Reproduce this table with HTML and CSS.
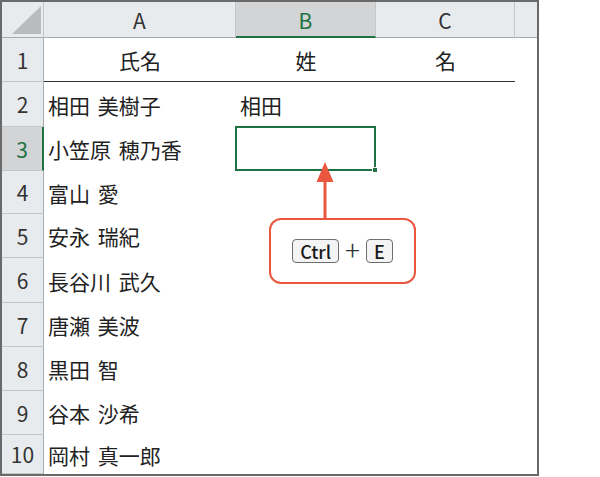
FILE: index.html
```html
<!DOCTYPE html>
<html lang="ja">
<head>
<meta charset="utf-8">
<link rel="stylesheet" href="styles.css">
</head>
<body>
<div class="sheet">
  <div class="corner"><svg class="corner-tri" width="42" height="36" viewBox="0 0 42 36"><polygon points="10,32 39,4 39,32" fill="#b9bcbf"/></svg></div>
  <div class="colhead">A</div>
  <div class="colhead sel">B</div>
  <div class="colhead">C</div>
  <div class="colhead last"></div>

  <div class="rowhead">1</div>
  <div class="cell center rule">氏名</div>
  <div class="cell center rule">姓</div>
  <div class="cell center rule">名</div>
  <div class="cell"></div>

  <div class="rowhead">2</div>
  <div class="cell">相田 美樹子</div>
  <div class="cell">相田</div>
  <div class="cell"></div>
  <div class="cell"></div>

  <div class="rowhead sel">3</div>
  <div class="cell">小笠原 穂乃香</div>
  <div class="cell active"><span class="handle"></span></div>
  <div class="cell"></div>
  <div class="cell"></div>

  <div class="rowhead">4</div>
  <div class="cell">富山 愛</div>
  <div class="cell"></div>
  <div class="cell"></div>
  <div class="cell"></div>

  <div class="rowhead">5</div>
  <div class="cell">安永 瑞紀</div>
  <div class="cell"></div>
  <div class="cell"></div>
  <div class="cell"></div>

  <div class="rowhead">6</div>
  <div class="cell">長谷川 武久</div>
  <div class="cell"></div>
  <div class="cell"></div>
  <div class="cell"></div>

  <div class="rowhead">7</div>
  <div class="cell">唐瀬 美波</div>
  <div class="cell"></div>
  <div class="cell"></div>
  <div class="cell"></div>

  <div class="rowhead">8</div>
  <div class="cell">黒田 智</div>
  <div class="cell"></div>
  <div class="cell"></div>
  <div class="cell"></div>

  <div class="rowhead">9</div>
  <div class="cell">谷本 沙希</div>
  <div class="cell"></div>
  <div class="cell"></div>
  <div class="cell"></div>

  <div class="rowhead">10</div>
  <div class="cell">岡村 真一郎</div>
  <div class="cell"></div>
  <div class="cell"></div>
  <div class="cell"></div>

  <svg class="arrow" width="20" height="60" viewBox="0 0 20 60">
    <line x1="10" y1="18" x2="10" y2="60" stroke="#e9573f" stroke-width="3"/>
    <polygon points="10,2 1.5,22 18.5,22" fill="#e9573f"/>
  </svg>

  <div class="callout">
    <span class="key">Ctrl</span>
    <span class="plus">+</span>
    <span class="key">E</span>
  </div>
</div>
</body>
</html>
```

FILE: styles.css
```css
* { box-sizing: border-box; }

html, body {
  margin: 0;
  padding: 0;
  background: #ffffff;
}

body {
  font-family: "Noto Sans CJK JP", "Noto Sans", sans-serif;
  color: #222;
}

.sheet {
  position: relative;
  margin-top: 0;
  width: 539px;
  height: 476px;
  border: 2px solid #6a6a6a;
  display: grid;
  grid-template-columns: 42px 192px 140px 139px 22px;
  grid-template-rows: 36px 44px 45px 44px 43px 44px 45px 44px 44px 44px 39px;
  overflow: hidden;
}

.corner {
  background: #e8ebee;
  border-right: 1px solid #c4c6c8;
  border-bottom: 1px solid #a9abad;
}

.corner-tri { display: block; }

.colhead {
  background: #e8ebee;
  border-right: 1px solid #c4c6c8;
  border-bottom: 1px solid #a9abad;
  display: flex;
  align-items: center;
  justify-content: center;
  font-size: 21px;
  color: #333;
  padding-top: 1px;
}

.colhead.sel {
  background: #d2d4d6;
  color: #1f7244;
  border-bottom: 2px solid #1f7244;
}

.colhead.last {
  border-right: none;
}

.rowhead {
  background: #e8ebee;
  border-right: 1px solid #a9abad;
  border-bottom: 1px solid #c4c6c8;
  display: flex;
  align-items: center;
  justify-content: center;
  font-size: 21px;
  color: #333;
}

.rowhead.sel {
  background: #d2d4d6;
  color: #1f7244;
  border-right: 2px solid #1f7244;
}

.cell {
  position: relative;
  display: flex;
  align-items: center;
  padding-left: 4px;
  font-size: 21px;
  word-spacing: 3px;
  color: #222;
  white-space: nowrap;
}

.cell.center {
  justify-content: center;
  padding-left: 0;
}

.cell.rule {
  border-bottom: 1px solid #333;
}

.cell.active {
  border: 2px solid #1f7244;
  margin: -1px 0 0 -1px;
}

.handle {
  position: absolute;
  right: -4px;
  bottom: -4px;
  width: 6px;
  height: 6px;
  background: #1f7244;
  border: 1px solid #ffffff;
}

.arrow {
  position: absolute;
  left: 313px;
  top: 158px;
}

.callout {
  position: absolute;
  left: 267px;
  top: 216px;
  width: 147px;
  height: 66px;
  border: 2px solid #e9573f;
  border-radius: 12px;
  background: #ffffff;
  display: flex;
  align-items: center;
  justify-content: center;
  gap: 6px;
}

.key {
  display: inline-flex;
  align-items: center;
  justify-content: center;
  height: 24px;
  min-width: 24px;
  padding: 0 7px 1px;
  border: 1.5px solid #6e6e6e;
  border-radius: 4px;
  background: #f4f4f4;
  font-family: "Noto Sans CJK JP", "Noto Sans", sans-serif;
  font-size: 18px;
  font-weight: 500;
  color: #1a1a1a;
  line-height: 1;
}

.plus {
  font-family: "Noto Sans CJK JP", sans-serif;
  font-size: 28px;
  font-weight: 300;
  color: #333;
  line-height: 1;
  padding: 0 0 4px;
}
```
